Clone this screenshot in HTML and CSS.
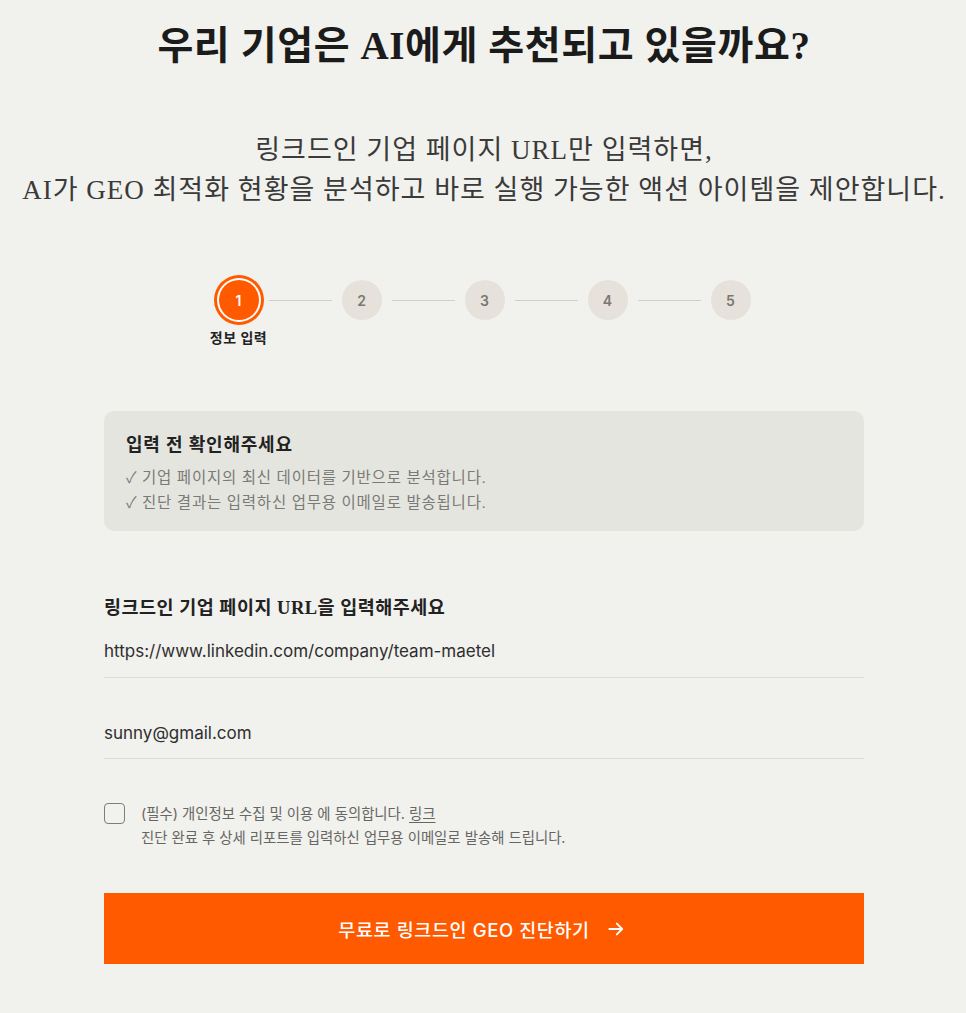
FILE: index.html
```html
<!DOCTYPE html>
<html lang="ko">
<head>
<meta charset="utf-8">
<title>GEO 진단</title>
<link rel="stylesheet" href="styles.css">
</head>
<body>
<main class="page">
  <h1 class="title">우리 기업은 AI에게 추천되고 있을까요?</h1>
  <p class="subtitle">링크드인 기업 페이지 URL만 입력하면,<br>AI가 GEO 최적화 현황을 분석하고 바로 실행 가능한 액션 아이템을 제안합니다.</p>

  <ol class="stepper">
    <li class="step active"><span class="dot">1</span><span class="step-label">정보 입력</span></li>
    <li class="line"></li>
    <li class="step"><span class="dot">2</span></li>
    <li class="line"></li>
    <li class="step"><span class="dot">3</span></li>
    <li class="line"></li>
    <li class="step"><span class="dot">4</span></li>
    <li class="line"></li>
    <li class="step"><span class="dot">5</span></li>
  </ol>

  <section class="notice">
    <h2 class="notice-title">입력 전 확인해주세요</h2>
    <p class="notice-line">✓ 기업 페이지의 최신 데이터를 기반으로 분석합니다.</p>
    <p class="notice-line">✓ 진단 결과는 입력하신 업무용 이메일로 발송됩니다.</p>
  </section>

  <form class="form">
    <label class="field-label" for="url">링크드인 기업 페이지 URL을 입력해주세요</label>
    <input class="field first" id="url" type="text" value="https://www.linkedin.com/company/team-maetel">
    <input class="field second" type="email" value="sunny@gmail.com">

    <div class="agree">
      <input class="check" type="checkbox">
      <div class="agree-text">
        <p>(필수) 개인정보 수집 및 이용 에 동의합니다. <a class="link">링크</a></p>
        <p>진단 완료 후 상세 리포트를 입력하신 업무용 이메일로 발송해 드립니다.</p>
      </div>
    </div>

    <button class="submit" type="button">
      <span>무료로 링크드인 GEO 진단하기</span>
      <svg class="arrow" width="20" height="20" viewBox="0 0 24 24" fill="none" stroke="#fff" stroke-width="2.2" stroke-linecap="round" stroke-linejoin="round"><path d="M4 12h15"/><path d="M13 5.5l6.5 6.5-6.5 6.5"/></svg>
    </button>
  </form>
</main>
</body>
</html>
```

FILE: styles.css
```css
* { box-sizing: border-box; }
html, body { margin: 0; padding: 0; }
body {
  background: #f1f1ed;
  color: #1d1d1d;
  font-family: Inter, "Noto Sans CJK KR", sans-serif;
  padding-left: 2px;
}
.page {
  width: 760px;
  margin: 0 auto;
  padding-top: 21px;
  padding-bottom: 49px;
}
.title {
  margin: 0 -60px;
  text-align: center;
  font-family: "Liberation Serif", "Noto Sans CJK KR", serif;
  font-size: 39px;
  line-height: 50px;
  font-weight: 700;
  color: #1b1b1b;
  white-space: nowrap;
  letter-spacing: 0.6px;
}
.subtitle {
  margin: 59px -120px 0;
  text-align: center;
  font-family: "Liberation Serif", "Noto Sans CJK KR", serif;
  font-size: 27px;
  line-height: 40px;
  font-weight: 400;
  color: #3a3a3a;
  white-space: nowrap;
  letter-spacing: 1px;
}
.stepper {
  list-style: none;
  margin: 70px 0 0;
  padding: 0;
  display: flex;
  justify-content: center;
  align-items: flex-start;
  padding-left: 1px;
}
.step {
  width: 40px;
  display: flex;
  flex-direction: column;
  align-items: center;
}
.dot {
  width: 40px;
  height: 40px;
  border-radius: 50%;
  background: #e6e2db;
  color: #7a7772;
  font-size: 14px;
  font-weight: 600;
  display: flex;
  align-items: center;
  justify-content: center;
}
.step.active .dot {
  background: #ff5a00;
  color: #fff;
  box-shadow: 0 0 0 2px #fff, 0 0 0 5px #ff5a00;
}
.step-label {
  margin-top: 9px;
  font-size: 14px;
  line-height: 18px;
  font-weight: 700;
  color: #222;
  white-space: nowrap;
  letter-spacing: 0.5px;
}
.line {
  width: 63px;
  height: 1px;
  margin: 20px 10px 0;
  background: #d2cfc9;
}
.notice {
  margin-top: 64px;
  background: #e5e5e0;
  border-radius: 10px;
  padding: 22px 22px 16px;
}
.notice-title {
  margin: 0;
  font-family: "Liberation Serif", "Noto Sans CJK KR", serif;
  font-size: 18px;
  line-height: 24px;
  font-weight: 700;
  color: #222;
  letter-spacing: 0.8px;
}
.notice-line {
  margin: 0;
  font-family: "Liberation Serif", "Noto Sans CJK KR", serif;
  font-size: 15.5px;
  line-height: 25px;
  color: #7a7a76;
  letter-spacing: 0.8px;
}
.notice-title + .notice-line { margin-top: 8px; }
.form { margin: 64px 0 0; }
.field-label {
  display: block;
  font-family: "Liberation Serif", "Noto Sans CJK KR", serif;
  font-size: 18.5px;
  line-height: 26px;
  font-weight: 700;
  color: #222;
  letter-spacing: 0.5px;
}
.field {
  display: block;
  width: 100%;
  border: 0;
  border-bottom: 1px solid #dcdcd6;
  background: transparent;
  font-family: Inter, "Noto Sans CJK KR", sans-serif;
  font-size: 17px;
  line-height: 20px;
  height: auto;
  color: #2e2e2e;
  padding: 8px 0 16px;
  margin: 0;
  outline: none;
}
.field.first { margin-top: 12px; }
.field.second { margin-top: 37px; padding-bottom: 15px; }
.agree {
  margin-top: 43px;
  display: flex;
  gap: 16px;
  align-items: flex-start;
}
.check {
  appearance: none;
  -webkit-appearance: none;
  width: 21px;
  height: 21px;
  margin: 1px 0 0;
  border: 1.5px solid #7d7d7a;
  border-radius: 4px;
  background: transparent;
  flex: none;
}
.agree-text p {
  margin: 0;
  font-size: 14.4px;
  line-height: 24px;
  color: #666663;
}
.link {
  color: #666663;
  text-decoration: underline;
  text-underline-offset: 3px;
}
.submit {
  margin-top: 43px;
  width: 100%;
  height: 71px;
  border: 0;
  background: #ff5a00;
  color: #fff;
  font-family: Inter, "Noto Sans CJK KR", sans-serif;
  font-size: 18.5px;
  font-weight: 500;
  letter-spacing: 0.6px;
  display: flex;
  align-items: center;
  justify-content: center;
  gap: 16px;
  padding: 0 4px 0 0;
  cursor: pointer;
}
.arrow { display: block; }
```
